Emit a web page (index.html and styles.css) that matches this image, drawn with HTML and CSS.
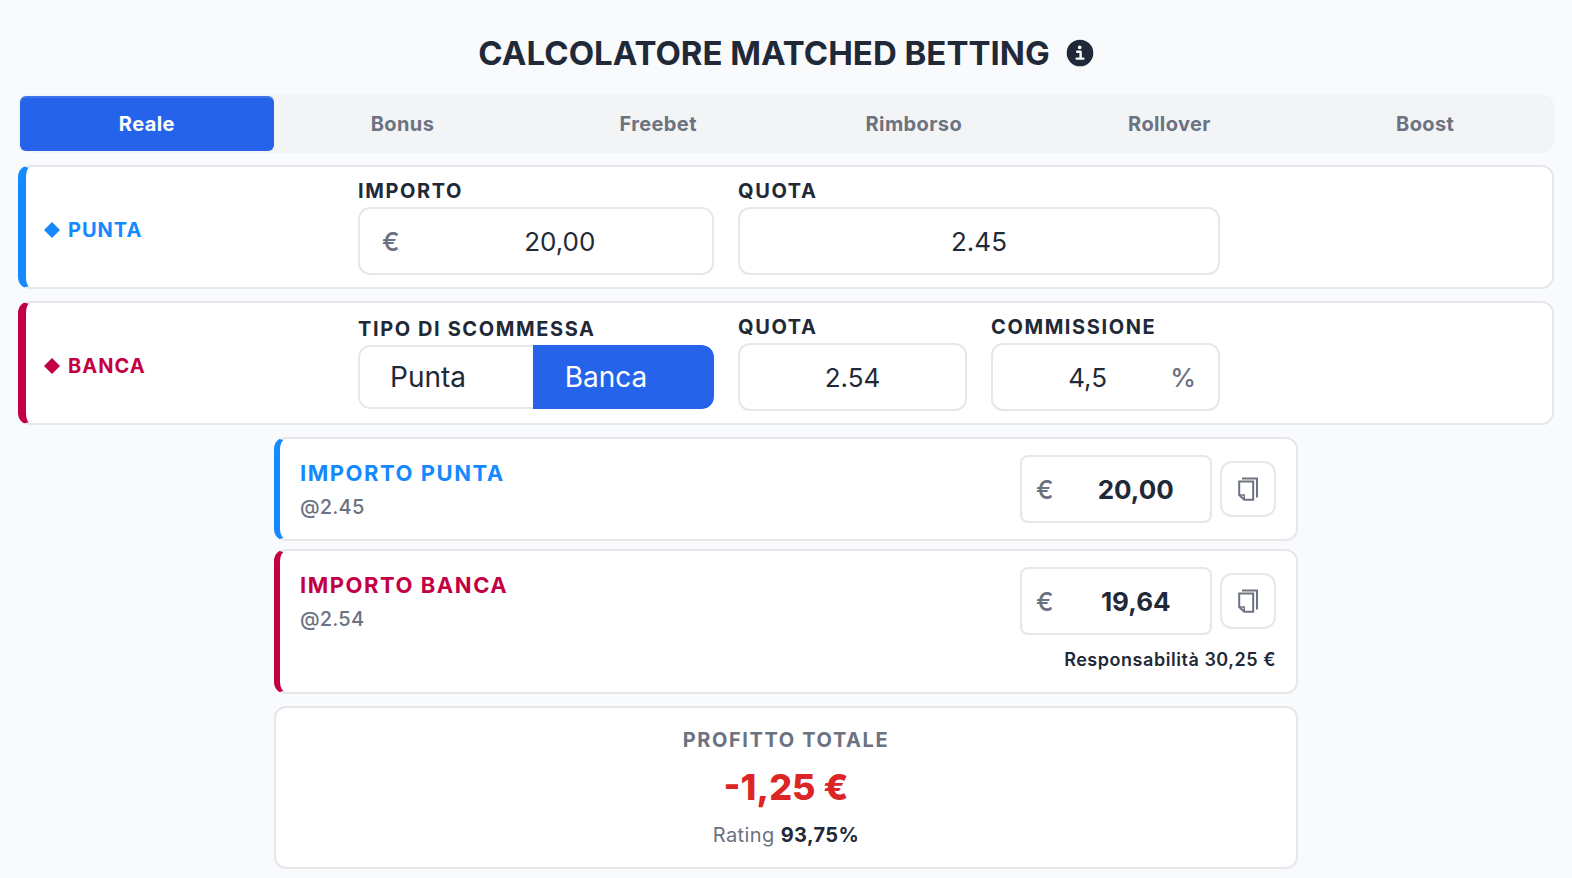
FILE: index.html
```html
<!DOCTYPE html>
<html lang="it">
<head>
    <meta charset="UTF-8">
    <meta name="viewport" content="width=device-width, initial-scale=1">
    <title>Calcolatore Matched Betting</title>
    <link rel="stylesheet" href="styles.css">
</head>
<body>
    <main class="calculator">
        <h1>
            CALCOLATORE MATCHED BETTING
            <button class="info" type="button" aria-label="Informazioni">
                <svg viewBox="0 0 28 28" width="28" height="28">
                    <circle cx="14" cy="14" r="13.3" fill="#1f2937"/>
                    <circle cx="13.7" cy="8.4" r="1.8" fill="#fff"/>
                    <path d="M11.2 12.8h3.4v6.6M10.6 19.6h6.8" fill="none" stroke="#fff" stroke-width="2.4" stroke-linecap="round" stroke-linejoin="round"/>
                </svg>
            </button>
        </h1>

        <nav class="tabs">
            <button class="tab active" type="button">Reale</button>
            <button class="tab" type="button">Bonus</button>
            <button class="tab" type="button">Freebet</button>
            <button class="tab" type="button">Rimborso</button>
            <button class="tab" type="button">Rollover</button>
            <button class="tab" type="button">Boost</button>
        </nav>

        <section class="card bet punta">
            <h2 class="side">
                <svg viewBox="0 0 16 16" width="16" height="16"><path d="M8 0l8 8-8 8-8-8z" fill="currentColor"/></svg>
                PUNTA
            </h2>
            <div class="group">
                <label for="importo">IMPORTO</label>
                <div class="field">
                    <span class="prefix">€</span>
                    <input type="text" id="importo" value="20,00">
                </div>
            </div>
            <div class="group">
                <label for="quota-punta">QUOTA</label>
                <div class="field">
                    <input type="text" id="quota-punta" value="2.45">
                </div>
            </div>
        </section>

        <section class="card bet banca">
            <h2 class="side">
                <svg viewBox="0 0 16 16" width="16" height="16"><path d="M8 0l8 8-8 8-8-8z" fill="currentColor"/></svg>
                BANCA
            </h2>
            <div class="group">
                <span class="label" id="tipo">TIPO DI SCOMMESSA</span>
                <div class="toggle" role="group" aria-labelledby="tipo">
                    <button type="button">Punta</button>
                    <button type="button" class="active">Banca</button>
                </div>
            </div>
            <div class="pair">
                <div class="group">
                    <label for="quota-banca">QUOTA</label>
                    <div class="field">
                        <input type="text" id="quota-banca" value="2.54">
                    </div>
                </div>
                <div class="group">
                    <label for="commissione">COMMISSIONE</label>
                    <div class="field with-suffix">
                        <input type="text" id="commissione" value="4,5">
                        <span class="suffix">%</span>
                    </div>
                </div>
            </div>
        </section>

        <div class="results">
            <section class="card result punta">
                <div>
                    <h3><label for="res-punta">IMPORTO PUNTA</label></h3>
                    <p class="odds">@2.45</p>
                </div>
                <div class="amount">
                    <div class="field">
                        <span class="prefix">€</span>
                        <input type="text" id="res-punta" value="20,00" readonly>
                    </div>
                    <button class="copy" type="button" aria-label="Copia importo punta">
                        <svg viewBox="0 0 20 26" width="20" height="26" fill="none" stroke="#6b7280">
                            <path d="M1.2 5.6h14v18.2h-9L1.2 19z" stroke-width="2"/>
                            <path d="M1.2 19h5v4.8" stroke-width="1.5"/>
                            <path d="M4 2.6h15v19" stroke-width="2"/>
                        </svg>
                    </button>
                </div>
            </section>

            <section class="card result banca">
                <div>
                    <h3><label for="res-banca">IMPORTO BANCA</label></h3>
                    <p class="odds">@2.54</p>
                </div>
                <div>
                    <div class="amount">
                        <div class="field">
                            <span class="prefix">€</span>
                            <input type="text" id="res-banca" value="19,64" readonly>
                        </div>
                        <button class="copy" type="button" aria-label="Copia importo banca">
                            <svg viewBox="0 0 20 26" width="20" height="26" fill="none" stroke="#6b7280">
                                <path d="M1.2 5.6h14v18.2h-9L1.2 19z" stroke-width="2"/>
                                <path d="M1.2 19h5v4.8" stroke-width="1.5"/>
                                <path d="M4 2.6h15v19" stroke-width="2"/>
                            </svg>
                        </button>
                    </div>
                    <p class="liability">Responsabilità 30,25 €</p>
                </div>
            </section>

            <section class="card profit">
                <h3>PROFITTO TOTALE</h3>
                <p class="total">-1,25 €</p>
                <p class="rating">Rating <strong>93,75%</strong></p>
            </section>
        </div>
    </main>
</body>
</html>
```
FILE: styles.css
```css
* {
    margin: 0;
    padding: 0;
    box-sizing: border-box;
}
body {
    background-color: #f9fafc;
    color: #1f2937;
    font-family: Inter, "Liberation Sans", sans-serif;
    font-size: 20px;
}
button, input {
    font: inherit;
    color: inherit;
    border: none;
    background: none;
}
button {
    cursor: pointer;
}
svg {
    display: block;
}
.calculator {
    padding: 30px 18px 8px;
}
h1 {
    display: flex;
    justify-content: center;
    align-items: center;
    gap: 16px;
    margin-bottom: 18px;
    font-size: 33px;
    font-weight: 700;
    line-height: 46px;
}

/* tabs */
.tabs {
    display: grid;
    grid-template-columns: repeat(6, 1fr);
    gap: 2px;
    padding: 2px;
    margin-bottom: 12px;
    border-radius: 12px;
    background-color: #f3f4f6;
}
.tab {
    height: 55px;
    border-radius: 6px;
    color: #6b7280;
    font-weight: 700;
    letter-spacing: 0.02em;
}
.tab.active {
    background-color: #2563eb;
    color: #ffffff;
    box-shadow: inset 0 2px 0 rgba(255, 255, 255, 0.12);
}

/* cards */
.card {
    border: 2px solid #e5e7eb;
    border-radius: 12px;
    background-color: #ffffff;
}
.card.punta {
    border-left-color: #1689ff;
}
.card.banca {
    border-left-color: #c30045;
}
.punta h2, .punta h3 {
    color: #1689ff;
}
.banca h2, .banca h3 {
    color: #c30045;
}
.bet {
    display: grid;
    grid-template-columns: 290fr 356fr 482fr 290fr;
    align-items: center;
    gap: 24px;
    padding: 12px 18px;
    margin-bottom: 12px;
    border-left-width: 8px;
}
.side {
    display: flex;
    align-items: center;
    gap: 8px;
    padding-top: 6px;
    font-size: 20px;
    font-weight: 700;
    letter-spacing: 0.05em;
}
.group label, .label {
    display: block;
    margin-bottom: 4px;
    font-weight: 700;
    line-height: 24px;
    letter-spacing: 0.08em;
}
.pair {
    display: grid;
    grid-template-columns: 1fr 1fr;
    gap: 24px;
}

/* fields */
.field {
    display: flex;
    align-items: center;
    height: 68px;
    border: 2px solid #e5e7eb;
    border-radius: 12px;
    font-size: 26px;
}
.field input {
    flex: 1;
    width: 100%;
    min-width: 0;
    height: 100%;
    text-align: center;
    outline: none;
}
.prefix, .suffix {
    color: #6b7280;
    font-weight: 500;
}
.prefix {
    padding: 0 8px 0 22px;
}
.suffix {
    padding-right: 22px;
}
.with-suffix input {
    padding-left: 12px;
}
.toggle {
    display: flex;
    height: 64px;
    overflow: hidden;
    border-radius: 12px;
    font-size: 28px;
}
.toggle button {
    flex: 1 1 auto;
    padding: 0 30px;
    border: 2px solid #e5e7eb;
    border-right: none;
    border-radius: 12px 0 0 12px;
    text-align: left;
}
.toggle .active {
    border-color: #2563eb;
    border-radius: 0 12px 12px 0;
    background-color: #2563eb;
    color: #ffffff;
}

/* results */
.results {
    width: 66.67%;
    margin: 0 auto;
}
.result {
    display: flex;
    justify-content: space-between;
    padding: 16px 20px;
    margin-bottom: 8px;
    border-left-width: 6px;
}
.result.banca {
    margin-bottom: 12px;
}
.result h3 {
    font-size: 22px;
    font-weight: 700;
    line-height: 36px;
    letter-spacing: 0.07em;
}
.odds {
    color: #6b7280;
    font-weight: 500;
    line-height: 32px;
    letter-spacing: 0.01em;
}
.amount {
    display: flex;
    align-items: center;
    gap: 8px;
}
.amount .field {
    width: 192px;
    border-radius: 8px;
}
.amount .prefix {
    padding-left: 14px;
}
.amount input {
    font-weight: 700;
}
.copy {
    display: grid;
    place-items: center;
    width: 56px;
    height: 56px;
    border: 2px solid #e5e7eb;
    border-radius: 12px;
}
.liability {
    margin: 10px 0 2px;
    font-size: 18px;
    font-weight: 600;
    line-height: 29px;
    letter-spacing: 0.03em;
    text-align: right;
}
.profit {
    padding: 16px;
    text-align: center;
}
.profit h3 {
    color: #6b7280;
    font-size: 20px;
    font-weight: 700;
    line-height: 32px;
    letter-spacing: 0.08em;
}
.total {
    color: #dc2626;
    font-size: 36px;
    font-weight: 800;
    line-height: 63px;
}
.rating {
    color: #6b7280;
    line-height: 32px;
    letter-spacing: 0.02em;
}
.rating strong {
    color: #1f2937;
    font-weight: 700;
}
```
